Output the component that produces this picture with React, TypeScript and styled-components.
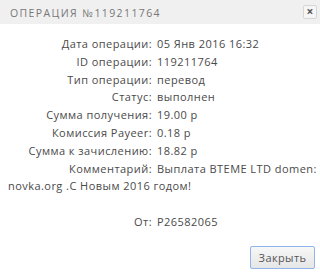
import { FC } from 'react'
import styled, { createGlobalStyle } from 'styled-components';

const GlobalStyle = createGlobalStyle`
    html, body {
        margin: 0;
        padding: 0;
        background: #fff;
    }
    body {
        font-family: "Open Sans", "Liberation Sans", sans-serif;
    }
`;

const rows: { label: string; value: string }[] = [
    { label: 'Дата операции:', value: '05 Янв 2016 16:32' },
    { label: 'ID операции:', value: '119211764' },
    { label: 'Тип операции:', value: 'перевод' },
    { label: 'Статус:', value: 'выполнен' },
    { label: 'Сумма получения:', value: '19.00 р' },
    { label: 'Комиссия Payeer:', value: '0.18 р' },
    { label: 'Сумма к зачислению:', value: '18.82 р' },
    { label: 'Комментарий:', value: 'Выплата BTEME LTD domen: novka.org .C Новым 2016 годом!' },
];

const App:FC = () => {
    return (
        <>
            <GlobalStyle/>
            <Dialog>
                <Header>
                    <Title>Операция №119211764</Title>
                    <CloseIcon aria-label="close">×</CloseIcon>
                </Header>
                <Body>
                    {rows.map(r => (
                        <Row key={r.label}>
                            <Label>{r.label}</Label>
                            {r.value}
                        </Row>
                    ))}
                    <Row>&nbsp;</Row>
                    <Row>
                        <Label>От:</Label>
                        P26582065
                    </Row>
                </Body>
                <Footer>
                    <CloseButton type="button">Закрыть</CloseButton>
                </Footer>
            </Dialog>
        </>
    )
}

const Dialog = styled.div`
    width: 320px;
    height: 273px;
    display: flex;
    flex-direction: column;
    background: #fff;
    overflow: hidden;
`;

const Header = styled.div`
    height: 24px;
    display: flex;
    align-items: center;
    justify-content: space-between;
    padding: 0 3px 0 10px;
    background: #f0f0f0;
`;

const Title = styled.div`
    font-size: 10.5px;
    letter-spacing: 1.4px;
    text-transform: uppercase;
    color: #777;
    margin-top: 1px;
`;

const CloseIcon = styled.div`
    width: 12px;
    height: 12px;
    border: 1px solid #d6d6d6;
    border-radius: 2px;
    background: #f6f6f6;
    color: #555;
    font-size: 12px;
    font-weight: 700;
    line-height: 11px;
    text-align: center;
`;

const Body = styled.div`
    padding: 11px 0 0 8px;
    font-size: 11px;
    letter-spacing: 0.45px;
    line-height: 17.8px;
    color: #4a4a4a;
`;

const Row = styled.div``;

const Label = styled.span`
    display: inline-block;
    width: 144px;
    margin-right: 5px;
    text-align: right;
`;

const Footer = styled.div`
    flex: 1;
    display: flex;
    justify-content: flex-end;
    align-items: flex-end;
    padding: 0 5px 4px 0;
`;

const CloseButton = styled.button`
    width: 65px;
    height: 23px;
    border: 1px solid #8fb5ea;
    border-radius: 2px;
    background: linear-gradient(#f7f7f7, #e6e6e6);
    color: #555;
    font-family: "Open Sans", "Liberation Sans", sans-serif;
    font-size: 11px;
    letter-spacing: 0.4px;
    padding: 0;
`;

export default App
